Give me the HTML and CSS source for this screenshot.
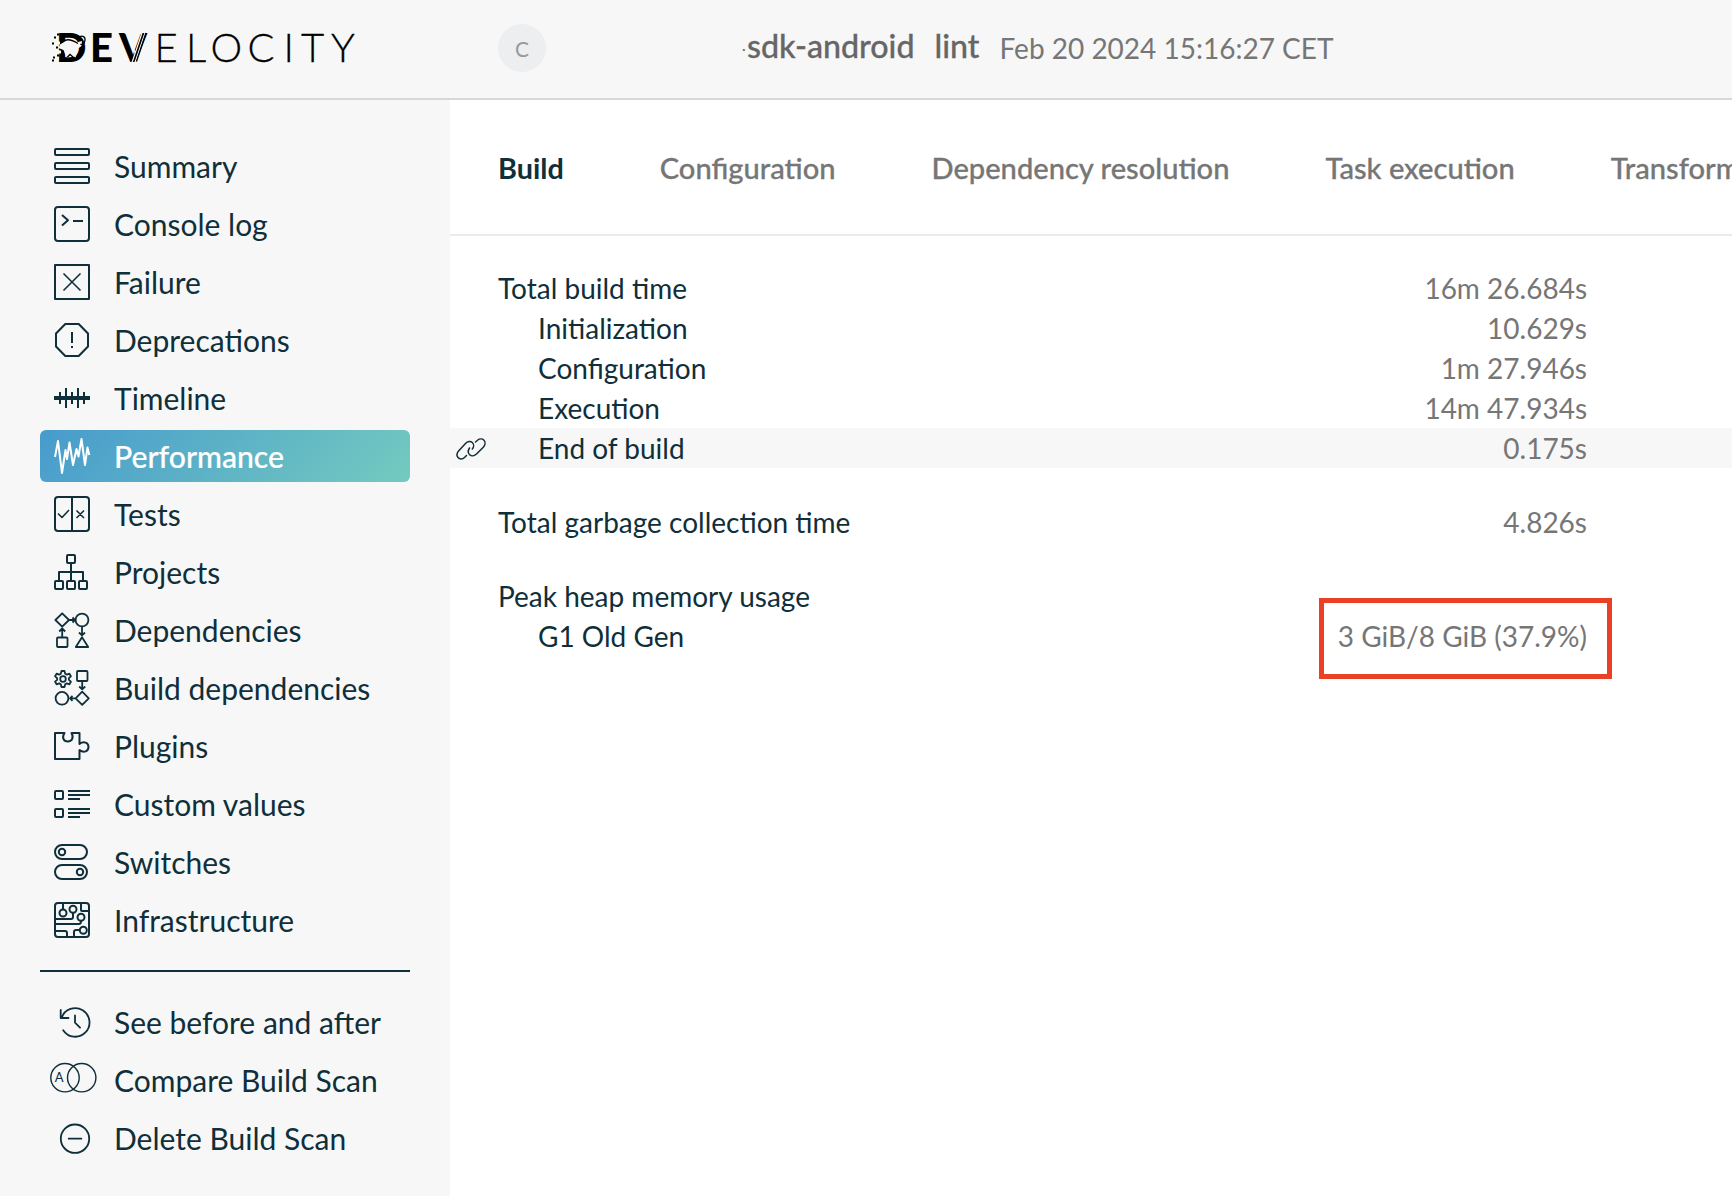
FILE: index.html
```html
<!DOCTYPE html>
<html lang="en">
<head>
<meta charset="utf-8">
<title>Develocity</title>
<link rel="stylesheet" href="styles.css">
</head>
<body>
<header class="header">
  <svg class="logo" width="310" height="44" viewBox="0 -0.5 310 44" role="img" aria-label="Develocity">
    <text class="logo-bold" x="4" y="35">D</text>
    <text class="logo-bold" x="38" y="35">E</text>
    <text class="logo-bold" x="67" y="35">V</text>
    <text class="logo-light" y="35" x="102.500 134 158.500 195.500 231.500 249 279">ELOCITY</text>
    <path class="logo-cut" d="M8 18l5-3 7-1.500 4 2.500 6-1.500-.500 5-3.500 2.500-1 5-1.500 4-4-2.500-4 3-2.500-4-1.500-4-5-2z"/>
    <path class="logo-line" d="M26 11.500c4-4 8.500-1 6.500 4c-1 3-3 3-4 2M9 16c5-4.500 11-3 17 1M15 31l3-3 3 2.500"/>
    <path class="logo-cut" d="M3 15h5v3H3zM4 24h5v3H4zM3 30h4v3H3z"/>
    <path class="logo-dot" d="M2 10h2v2H2zM5 7h2v2H5zM0 16h2v2H0zM4 20h2v2H4zM1 30h2v2H1zM5 28h2v2H5zM0 33h2v2H0z"/>
    <path class="logo-stripe" d="M76 6.500l7 20M90 6.500L80 36M93 6.500L83 36"/>
    <path class="logo-line" d="M94 6.500L84.500 35"/>
  </svg>
  <span class="avatar">C</span>
  <div class="build">
    <span class="tick">·</span><span class="project">sdk-android</span><span class="task">lint</span><span class="date">Feb 20 2024 15:16:27 CET</span>
  </div>
</header>
<div class="page">
  <aside class="sidebar">
    <nav class="menu">
      <a class="item"><svg class="icon" viewBox="0 0 36 36"><rect x="1" y="1" width="34" height="6" rx="1"/><rect x="1" y="15" width="34" height="6" rx="1"/><rect x="1" y="29" width="34" height="6" rx="1"/></svg>Summary</a>
      <a class="item"><svg class="icon" viewBox="0 0 36 36"><rect x="1" y="1" width="34" height="34" rx="3"/><path d="M8 9l6 5.200-6 5.300M19 15h10"/></svg>Console log</a>
      <a class="item"><svg class="icon" viewBox="0 0 36 36"><rect x="1" y="1" width="34" height="34"/><path class="thin" d="M9.500 9.500l17 17M26.500 9.500l-17 17"/></svg>Failure</a>
      <a class="item"><svg class="icon" viewBox="0 0 36 36"><path d="M11.300 2h13.400l9.300 9.500v13l-9.300 9.500H11.300L2 24.500v-13zM18 10v11M18 24v2"/></svg>Deprecations</a>
      <a class="item"><svg class="icon" viewBox="0 0 36 36"><path class="thick" d="M0 18h36"/><path d="M6 12v12M12 8v20M18 12v12M24 8v20M30 12v12"/></svg>Timeline</a>
      <a class="item active"><svg class="icon" viewBox="0 0 36 36"><path d="M1 19L4 3l4 32 3.500-23L13 21l2.500-16.500L19 27l3.500-16 2 7.500L27.500 1 31 27l2.500-17.500L35.300 17"/></svg>Performance</a>
      <a class="item"><svg class="icon" viewBox="0 0 36 36"><rect x="1" y="1" width="34" height="34" rx="3"/><path d="M18 1v34"/><path class="thin" d="M4 17.500l4 4 7-7.500M22.500 14.500l7.500 7.500M30 14.500L22.500 22"/></svg>Tests</a>
      <a class="item"><svg class="icon" viewBox="0 0 36 36"><rect x="13" y="1" width="8" height="8" rx="1"/><rect x="1" y="27" width="8" height="8" rx="1"/><rect x="13" y="27" width="8" height="8" rx="1"/><rect x="25" y="27" width="8" height="8" rx="1"/><path d="M17 9v18M5 27v-9h24v9"/></svg>Projects</a>
      <a class="item"><svg class="icon fine" viewBox="0 0 36 36"><path d="M8.200 1.300L15 8l-6.800 6.700L1.400 8z"/><circle cx="28" cy="8" r="6.400"/><rect x="3" y="25.500" width="10.500" height="9.500" rx="1"/><path d="M28 25.300L34.200 35H21.800zM15 8h6M18.500 5.500L21 8l-2.500 2.500M8.200 25v-8M5.200 19.500l3-3 3 3M28 15v8M25 20.500l3 2.800 3-2.800"/></svg>Dependencies</a>
      <a class="item"><svg class="icon fine" viewBox="0 0 36 36"><path d="M7.500 1h3l.700 2.700 1.600.900 2.600-.900 1.500 2.600-2 1.800v1.800l2 1.800-1.500 2.600-2.600-.900-1.600.900-.700 2.700h-3l-.700-2.700-1.600-.900-2.600.900L1.100 11.700l2-1.800V8.100l-2-1.800 1.500-2.600 2.600.900 1.600-.900z"/><circle cx="9" cy="9" r="2.800"/><rect x="23" y="1" width="10.500" height="10" rx="1"/><path d="M28.200 21.600l6.600 6.700-6.600 6.600-6.600-6.600zM28.200 11v8M25.200 16.500l3 2.800 3-2.800M21.500 28.300H15.500M18.500 25.800L16 28.300l2.500 2.500"/><circle cx="8" cy="28.300" r="6.400"/></svg>Build dependencies</a>
      <a class="item"><svg class="icon" viewBox="0 0 36 36"><path d="M1 5h9.500C7.500 9.500 9.500 13.500 13.800 13.500S20 9.500 17.500 5h8v11c4.500-3.500 9-1 9 3s-4.500 6.500-9 3v9H1z"/></svg>Plugins</a>
      <a class="item"><svg class="icon" viewBox="0 0 36 36"><rect x="1" y="5" width="8" height="8" rx="1"/><rect x="1" y="23" width="8" height="8" rx="1"/><path d="M14 5h22M14 9h22M14 13h12M14 23h22M14 27h22M14 31h12"/></svg>Custom values</a>
      <a class="item"><svg class="icon" viewBox="0 0 36 36"><rect x="1" y="1" width="32" height="14" rx="7"/><rect x="1" y="21" width="32" height="14" rx="7"/><circle cx="8" cy="8" r="3.200"/><circle cx="26" cy="28" r="3.200"/></svg>Switches</a>
      <a class="item"><svg class="icon" viewBox="0 0 36 36"><rect x="1" y="1" width="34" height="34" rx="3"/><circle cx="9" cy="11" r="3.500"/><circle cx="19" cy="7.300" r="3.500"/><circle cx="27" cy="15.300" r="3.500"/><circle cx="29.300" cy="28.200" r="3.500"/><path d="M9 1v6.500M19 11v4q0 2-2 2H1M27 19q0 3-2 3H1M26 28h-4q-2 0-2 2v5M27 1v7q0 1 1 1h7M1 29h10q2 0 2 2v4"/></svg>Infrastructure</a>
    </nav>
    <nav class="menu secondary">
      <a class="item"><svg class="icon" viewBox="0 0 36 36"><path class="round" d="M7.700 13.700a14.300 14.300 0 1 1 1.500 12.500M6.700 6v8h7.800M21 11.500v7.200l5 5"/></svg>See before and after</a>
      <a class="item"><svg class="icon" viewBox="0 0 36 36"><circle class="hair" cx="11" cy="15.700" r="14.200"/><circle class="hair" cx="27.700" cy="15.700" r="14.200"/><text class="glyph" x="5.200" y="19.500">A</text></svg>Compare Build Scan</a>
      <a class="item"><svg class="icon" viewBox="0 0 36 36"><circle class="round" cx="21" cy="18.700" r="14.200"/><path class="round" d="M14.700 18.700h12.600"/></svg>Delete Build Scan</a>
    </nav>
  </aside>
  <main class="content">
    <nav class="tabs">
      <a class="tab current">Build</a><a class="tab">Configuration</a><a class="tab">Dependency resolution</a><a class="tab">Task execution</a><a class="tab">Transform</a>
    </nav>
    <section class="metrics">
      <div class="group">
        <div class="row"><span>Total build time</span><span class="value">16m 26.684s</span></div>
        <div class="row sub"><span>Initialization</span><span class="value">10.629s</span></div>
        <div class="row sub"><span>Configuration</span><span class="value">1m 27.946s</span></div>
        <div class="row sub"><span>Execution</span><span class="value">14m 47.934s</span></div>
        <div class="row sub hover"><svg class="link" viewBox="0 0 30 22"><path d="M10.500 17.500L8.500 19.500C6.500 21.500 3.500 21.300 2 19.500S.800 15 2.800 12.800L9.500 5.500C11.500 3.300 14.500 2.800 16.300 4.500S18 9 16.300 11M19.500 4L21.500 2.300C23.500.600 26.300.600 28 2.300S29.200 7 27.300 9.200L20.500 16C18.500 18 15.500 18.500 13.700 16.800S12 12.300 13.500 10"/></svg><span>End of build</span><span class="value">0.175s</span></div>
      </div>
      <div class="group">
        <div class="row"><span>Total garbage collection time</span><span class="value">4.826s</span></div>
      </div>
      <div class="group">
        <div class="row"><span>Peak heap memory usage</span></div>
        <div class="row sub"><span>G1 Old Gen</span><span class="value marked">3 GiB/8 GiB (37.9%)</span></div>
      </div>
    </section>
  </main>
</div>
</body>
</html>
```
FILE: styles.css
```css
*, *::after { box-sizing: border-box; }

body {
  margin: 0;
  height: 1196px;
  overflow: hidden;
  display: flex;
  flex-direction: column;
  background: #fff;
  color: #0f2f3a;
  font-family: Lato, "Open Sans", sans-serif;
  font-size: 28px;
}

.header {
  display: flex;
  align-items: center;
  flex: none;
  height: 100px;
  padding: 0 0 2px 52px;
  background: #f7f7f7;
  border-bottom: 2px solid #d8d8d8;
}

.logo { flex: none; width: 310px; height: 44px; overflow: visible; }
.logo text { fill: #000; }
.logo-bold { font-size: 40px; font-weight: 900; }
.logo-light { font-size: 40px; font-weight: 300; stroke: #000; stroke-width: 0.3; }
.logo-cut { fill: #f7f7f7; }
.logo-dot { fill: #000; }
.logo-line { fill: none; stroke: #000; stroke-width: 1.3; }
.logo-stripe { fill: none; stroke: #f7f7f7; stroke-width: 1.2; }

.avatar {
  display: flex;
  align-items: center;
  justify-content: center;
  width: 48px;
  height: 48px;
  margin-left: 136px;
  border-radius: 50%;
  background: #eceef0;
  color: #999;
  font-size: 21px;
}

.build {
  display: flex;
  align-items: baseline;
  margin: -6px 0 0 196px;
  color: #666;
  white-space: nowrap;
}
.tick { width: 5px; font-size: 14px; position: relative; top: -4px; }
.project, .task {
  font-size: 32.2px;
  font-weight: 500;
  -webkit-text-stroke: 0.3px currentColor;
}
.task { margin-left: 20px; }
.date { margin-left: 20px; color: #767676; position: relative; top: 1px; }

.page { display: flex; flex: 1; min-height: 0; }

.sidebar {
  flex: none;
  width: 450px;
  padding: 40px 40px 0;
  background: #f7f7f7;
}

.menu { display: flex; flex-direction: column; gap: 6px; }
.secondary {
  margin-top: 24px;
  padding-top: 24px;
  border-top: 2px solid #0f2f3a;
}

.item {
  display: flex;
  align-items: center;
  gap: 24px;
  height: 52px;
  padding: 0 14px;
  border-radius: 6px;
  font-size: 30px;
  line-height: 36px;
  white-space: nowrap;
}
.active {
  background: linear-gradient(135deg, #479bcd, #74cabf);
  color: #fff;
  font-weight: 500;
  font-size: 30.2px;
  -webkit-text-stroke: 0.2px currentColor;
}

.icon {
  flex: none;
  width: 36px;
  height: 36px;
  overflow: visible;
  fill: none;
  stroke: currentColor;
  stroke-width: 2;
  stroke-linejoin: round;
}
.fine { stroke-width: 1.8; }
.thin { stroke-width: 1.6; }
.thick { stroke-width: 4; }
.hair { stroke-width: 1.4; }
.round { stroke-width: 1.8; stroke-linecap: round; }
.glyph { fill: currentColor; stroke: none; font-size: 13px; text-anchor: middle; }

.content { flex: 1; min-width: 0; }

.tabs {
  display: flex;
  gap: 96px;
  height: 136px;
  padding-left: 48px;
  overflow: hidden;
  border-bottom: 2px solid #ebebeb;
  color: #767676;
  font-size: 29.1px;
  font-weight: 500;
  line-height: 135px;
  white-space: nowrap;
  -webkit-text-stroke: 0.3px currentColor;
}
.current {
  color: #0f2f3a;
  font-size: 28.8px;
  font-weight: 700;
  line-height: 137px;
  -webkit-text-stroke: 0;
}

.metrics {
  display: flex;
  flex-direction: column;
  gap: 34px;
  padding-top: 32px;
}
.row {
  position: relative;
  display: flex;
  justify-content: space-between;
  height: 40px;
  padding: 0 145px 0 48px;
  line-height: 40px;
}
.sub { padding-left: 88px; }
.hover { background: #f7f7f7; }
.value { color: #767676; }

.link {
  position: absolute;
  left: 6px;
  top: 10px;
  width: 30px;
  height: 22px;
  overflow: visible;
  fill: none;
  stroke: #0f2f3a;
  stroke-width: 1.5;
  stroke-linecap: round;
}

.marked { position: relative; }
.marked::after {
  content: "";
  position: absolute;
  top: -18px;
  right: -25px;
  width: 293px;
  height: 81px;
  border: 5px solid #ea4026;
}
```
